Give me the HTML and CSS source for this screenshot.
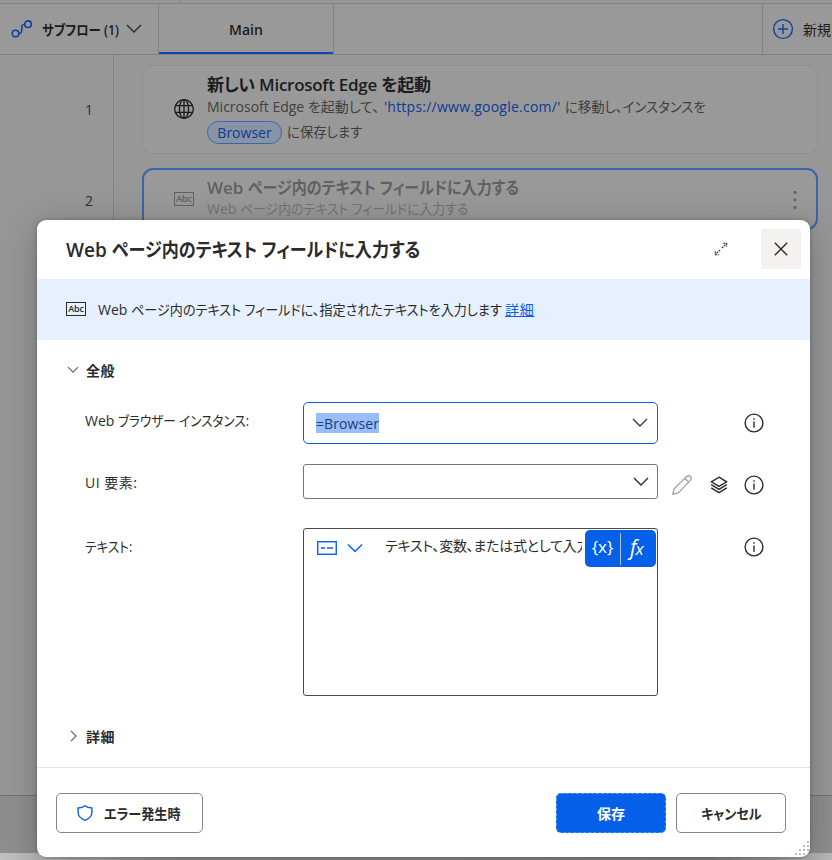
FILE: index.html
```html
<!DOCTYPE html>
<html lang="ja">
  <head>
    <meta charset="UTF-8" />
    <meta name="viewport" content="width=device-width, initial-scale=1" />
    <title>Web ページ内のテキスト フィールドに入力する</title>
    <link rel="stylesheet" href="styles.css" />
  </head>
  <body>
    <div class="app">
      <div class="toolbar"><span class="toolbar-split"></span></div>
      <nav class="tabs">
        <div class="subflows">
          <svg class="flow-icon" width="22" height="18" viewBox="0 0 22 18">
            <circle cx="4.5" cy="13.5" r="3.3" />
            <circle cx="17" cy="4.2" r="3.3" />
            <path d="M7.8 13.5c2.5 0 3-1.2 3-4.5s.3-4.8 2.9-4.8" />
          </svg>
          <span class="subflows-label"><span class="narrow n88">サブフロー (1)</span></span>
          <svg class="chevron" width="16" height="10" viewBox="0 0 16 10">
            <path d="M1 1l7 7 7-7" />
          </svg>
        </div>
        <div class="tab">Main</div>
        <div class="new-flow">
          <svg width="22" height="22" viewBox="0 0 22 22">
            <circle cx="11" cy="11" r="9.4" />
            <path d="M11 6v10M6 11h10" />
          </svg>
          <span>新規</span>
        </div>
      </nav>

      <main class="steps">
        <div class="gutter">
          <span>1</span>
          <span>2</span>
        </div>
        <div class="cards">
          <div class="card">
            <svg class="globe" width="22" height="22" viewBox="0 0 22 22">
              <circle cx="11" cy="11" r="9.3" />
              <ellipse cx="11" cy="11" rx="4.6" ry="9.3" />
              <path d="M11 1.7v18.6M2.5 7.7h17M2.500 14.300h17" />
            </svg>
            <div class="card-text">
              <h2 class="card-title title-edge">新しい Microsoft Edge を起動</h2>
              <p class="card-line"><span class="run-a">Microsoft Edge を起動して、</span><span class="url">'https://www.google.com/'</span><span class="run-b narrow n95">に移動し、インスタンスを</span></p>
              <p class="card-line second"><span class="pill">Browser</span><span class="run-c narrow n95">に保存します</span></p>
            </div>
          </div>
          <div class="card selected">
            <span class="abc">Abc</span>
            <div class="card-text">
              <h2 class="card-title">Web <span class="narrow n88">ページ内のテキスト フィールドに入力する</span></h2>
              <p class="card-line">Web <span class="narrow n92">ページ内のテキスト フィールドに入力する</span></p>
            </div>
            <svg class="more" width="4" height="20" viewBox="0 0 4 20">
              <circle cx="2" cy="2.500" r="1.400" />
              <circle cx="2" cy="10" r="1.400" />
              <circle cx="2" cy="17.500" r="1.400" />
            </svg>
          </div>
        </div>
      </main>
      <div class="statusbar"></div>
      <div class="desktop"></div>
    </div>

    <div class="dialog" role="dialog">
      <header class="dialog-header">
        <h1 class="dialog-title">Web <span class="narrow n90">ページ内のテキスト フィールドに入力する</span></h1>
        <svg class="expand" width="14" height="14" viewBox="0 0 14 14">
          <path class="line" d="M7.800 6.200L12.500 1.500M6.200 7.800L1.500 12.500" />
          <path class="line" d="M9.200 1.300h3.500v3.500M1.300 9.200v3.500h3.500" />
        </svg>
        <button class="close">
          <svg width="14" height="14" viewBox="0 0 14 14">
            <path d="M.8.8l12.400 12.400M13.200.8L.8 13.200" />
          </svg>
        </button>
      </header>

      <div class="info">
        <span class="abc">Abc</span>
        <span class="info-text">Web <span class="narrow n93">ページ内のテキスト フィールドに、指定されたテキストを入力します</span></span>
        <a class="more-link">詳細</a>
      </div>

      <section class="form">
        <div class="group">
          <svg width="12" height="8" viewBox="0 0 12 8"><path d="M1 1.200l5 5 5-5" /></svg>
          <span>全般</span>
        </div>

        <div class="row row-browser">
          <label>Web <span class="narrow n90">ブラウザー インスタンス:</span></label>
          <div class="combo focused">
            <span class="selection">=Browser</span>
            <svg class="chevron" width="16" height="10" viewBox="0 0 16 10"><path d="M1 1l7 7 7-7" /></svg>
          </div>
          <svg class="info-icon" width="20" height="20" viewBox="0 0 20 20">
            <circle cx="10" cy="10" r="8.900" />
            <path d="M10 8.500v6.300M10 5.200v1.600" />
          </svg>
        </div>

        <div class="row row-ui">
          <label class="lbl-ui">UI 要素:</label>
          <div class="combo">
            <svg class="chevron" width="16" height="10" viewBox="0 0 16 10"><path d="M1 1l7 7 7-7" /></svg>
          </div>
          <svg class="pencil" width="20" height="20" viewBox="0 0 20 20">
            <path d="M.8 19.200l1.300-5.400L14.600 1.600c2.700-2.200 6 .9 3.800 3.800L6.200 17.900zM12.900 3.300l3.800 3.800" />
          </svg>
          <svg class="layers" width="18" height="18" viewBox="0 0 18 18">
            <path d="M9 1.200l7.600 4.600L9 10.400 1.400 5.800zM1.200 8.700L9 13.400l7.800-4.700M1.200 11.800L9 16.600l7.800-4.800" />
          </svg>
          <svg class="info-icon" width="20" height="20" viewBox="0 0 20 20">
            <circle cx="10" cy="10" r="8.900" />
            <path d="M10 8.500v6.300M10 5.200v1.600" />
          </svg>
        </div>

        <div class="row row-text">
          <label><span class="narrow n90">テキスト:</span></label>
          <div class="textbox">
            <svg class="mode" width="20" height="14" viewBox="0 0 20 14">
              <rect x=".75" y=".75" width="18.500" height="12.500" />
              <path d="M4 7h4M10 7h6" />
            </svg>
            <svg class="chevron" width="16" height="10" viewBox="0 0 16 10"><path d="M1 1.500l7 7 7-7" /></svg>
            <span class="placeholder">テキスト、変数、または式として入力</span>
            <div class="expr">
              <span class="var">{x}</span>
              <span class="fx"><i class="f">f</i><i class="x">x</i></span>
            </div>
          </div>
          <svg class="info-icon" width="20" height="20" viewBox="0 0 20 20">
            <circle cx="10" cy="10" r="8.900" />
            <path d="M10 8.500v6.300M10 5.200v1.600" />
          </svg>
        </div>

        <div class="group group-detail">
          <svg width="12" height="12" viewBox="0 0 12 12"><path d="M4 1l5 5-5 5" /></svg>
          <span>詳細</span>
        </div>
      </section>

      <footer class="dialog-footer">
        <button class="btn btn-error">
          <svg width="16" height="16" viewBox="0 0 16 16">
            <path d="M8 .8c2 1.500 4.300 2.100 6.900 2.200v4.300c0 3.800-2.500 6.400-6.900 8-4.400-1.600-6.900-4.200-6.900-8V3C3.700 2.900 6 2.300 8 .8z" />
          </svg>
          <span class="narrow n93">エラー発生時</span>
        </button>
        <button class="btn btn-primary"><span>保存</span></button>
        <button class="btn btn-cancel"><span class="narrow mid n93">キャンセル</span></button>
      </footer>
      <svg class="grip" width="14" height="14" viewBox="0 0 14 14">
        <path d="M12 0h2v2h-2zM8 4h2v2H8zM12 4h2v2h-2zM4 8h2v2H4zM8 8h2v2H8zM12 8h2v2h-2zM0 12h2v2H0zM4 12h2v2H4zM8 12h2v2H8z" />
      </svg>
    </div>
  </body>
</html>
```
FILE: styles.css
```css
* {
  box-sizing: border-box;
}
body {
  margin: 0;
  width: 832px;
  height: 860px;
  position: relative;
  overflow: hidden;
  font-family: "Open Sans", "Noto Sans CJK JP", sans-serif;
  font-size: 14px;
  color: #2b2b2b;
  font-feature-settings: "palt";
  white-space: nowrap;
}
h1,
h2,
p {
  margin: 0;
}
svg {
  display: block;
  flex: none;
  fill: none;
  stroke: #2b2b2b;
  stroke-width: 1.4;
}
button {
  font: inherit;
  color: inherit;
  padding: 0;
  border: 0;
}

/* condensed kana, like the UI variant of the system font */
.narrow {
  display: inline-block;
  transform-origin: 0 50%;
}
.mid {
  transform-origin: 50% 50%;
}
.n88 {
  transform: scaleX(0.885);
}
.n90 {
  transform: scaleX(0.9);
}
.n92 {
  transform: scaleX(0.92);
}
.n93 {
  transform: scaleX(0.935);
}
.n95 {
  transform: scaleX(0.955);
}

/* dimmed designer window */
.app {
  display: flex;
  flex-direction: column;
  height: 860px;
  background: #979797;
}
.toolbar {
  height: 4px;
  flex: none;
  border-bottom: 1px solid #828282;
}
.toolbar-split {
  display: block;
  width: 181px;
  height: 3px;
  border-right: 1px solid #828282;
}
.tabs {
  display: flex;
  flex: none;
  height: 51px;
  border-bottom: 1px solid #828282;
  background: #999;
}
.subflows {
  display: flex;
  align-items: center;
  width: 159px;
  padding-left: 11px;
  border-right: 1px solid #828282;
  color: #1c1c1c;
  font-weight: 600;
}
.flow-icon {
  stroke: #0d42a0;
  stroke-width: 1.6;
}
.subflows-label {
  width: 76px;
  margin: 0 8px 0 9px;
}
.tab {
  width: 175px;
  line-height: 51px;
  text-align: center;
  font-weight: 600;
  color: #1c1c1c;
  border-right: 1px solid #828282;
  box-shadow: inset 0 -2px #0d47ad;
}
.new-flow {
  display: flex;
  align-items: center;
  gap: 9px;
  width: 70px;
  margin-left: auto;
  padding-left: 9px;
  border-left: 1px solid #828282;
  overflow: hidden;
  color: #1c1c1c;
}
.new-flow svg {
  stroke: #0d42a0;
}
.steps {
  display: flex;
  flex: 1;
}
.gutter {
  display: flex;
  flex-direction: column;
  width: 114px;
  padding: 39px 20px 0 0;
  border-right: 1px solid #828282;
  text-align: right;
  color: #303030;
}
.gutter span {
  height: 91px;
  line-height: 31px;
}
.cards {
  flex: 1;
  padding: 10px 14px 0 28px;
}
.card {
  display: flex;
  height: 89px;
  padding: 7px 20px 0 31px;
  border: 1px solid #8f8f8f;
  border-radius: 11px;
  background: #999;
}
.globe {
  margin: 25px 0 0 -1px;
  stroke: #1a1a1a;
  stroke-width: 1.3;
}
.card-text {
  flex: 1;
  padding-left: 12px;
}
.card-title {
  font-size: 17px;
  line-height: 24px;
  height: 23px;
  font-weight: 600;
  color: #1c1c1c;
}
.title-edge {
  letter-spacing: -0.27px;
}
.card-line {
  line-height: 21px;
  height: 21px;
  color: #3f3f3f;
}
.card-line.second {
  display: flex;
  align-items: center;
  height: 28px;
}
.url,
.pill {
  color: #0b3b91;
}
.run-a {
  display: inline-block;
  width: 177px;
}
.url {
  letter-spacing: 0.24px;
}
.run-b {
  margin-left: 5px;
}
.pill {
  width: 75px;
  height: 23px;
  line-height: 21px;
  margin: 2px 5px 0 0;
  border: 1px solid #3a66a9;
  border-radius: 12px;
  background: #8894a6;
  text-align: center;
}
.run-c {
  margin-top: 1px;
}
.selected {
  height: 62px;
  margin-top: 14px;
  padding: 6px 19px 0 30px;
  border: 2px solid #3a66a9;
}
.selected .card-title {
  color: #616161;
  height: 22px;
}
.selected .card-line {
  color: #737373;
}
.more {
  margin-top: 14px;
  fill: #606060;
  stroke: none;
}
.abc {
  flex: none;
  width: 20px;
  height: 14px;
  border: 1px solid #2b2b2b;
  font-size: 9px;
  line-height: 12px;
  letter-spacing: -0.2px;
  text-align: center;
  font-weight: 600;
}
.selected .abc {
  margin: 16px 1px 0 0;
  border-color: #606060;
  color: #606060;
}
.statusbar {
  height: 58px;
  border-top: 1px solid #747474;
  background: #8e8e8e;
}
.desktop {
  height: 7px;
  background: linear-gradient(90deg, #c0c0c0, #959595 20%, #888 85%, #b8b8b8);
}

/* dialog */
.dialog {
  position: absolute;
  left: 37px;
  top: 220px;
  width: 773px;
  height: 637px;
  border-radius: 9px;
  background: #fff;
  box-shadow: 0 6px 36px rgba(0, 0, 0, 0.24), 0 0 4px rgba(0, 0, 0, 0.25);
}
.dialog-header {
  display: flex;
  align-items: center;
  height: 59px;
  padding: 0 9px 2px 29px;
}
.dialog-title {
  flex: 1;
  font-size: 19px;
  font-weight: 600;
}
.expand {
  margin-right: 33px;
}
.expand .line {
  stroke-width: 1.1;
  stroke-dasharray: 2.2 0.8;
}
.close {
  display: flex;
  align-items: center;
  justify-content: center;
  width: 40px;
  height: 40px;
  background: #f3f2f1;
}
.info {
  display: flex;
  align-items: center;
  height: 61px;
  padding: 0 0 2px 29px;
  background: #e6f0ff;
}
.info-text {
  width: 402px;
  margin: 0 5px 0 12px;
}
.more-link {
  color: #0460e9;
  text-decoration: underline;
  letter-spacing: 0.7px;
}
.form {
  height: 427px;
  padding: 19px 0 0 30px;
}
.group {
  display: flex;
  align-items: center;
  gap: 7px;
  height: 22px;
  font-weight: 600;
  letter-spacing: 0.6px;
}
.group svg {
  stroke: #666;
  stroke-width: 1.2;
}
.row {
  display: flex;
  align-items: flex-start;
  padding-left: 18px;
}
.row label {
  width: 218px;
  padding-top: 9px;
  line-height: 20px;
}
.row .lbl-ui {
  letter-spacing: 0.5px;
}
.row-browser {
  margin-top: 21px;
  height: 62px;
}
.row-ui {
  height: 64px;
}
.row-text {
  height: 168px;
}
.combo {
  display: flex;
  align-items: center;
  justify-content: flex-end;
  width: 355px;
  height: 35px;
  padding: 0 8px 0 12px;
  border: 1px solid #767676;
  border-radius: 3px;
}
.focused {
  height: 42px;
  justify-content: space-between;
  padding-right: 9px;
  border-color: #0460e9;
  border-radius: 5px;
}
.selection {
  height: 20px;
  line-height: 21px;
  letter-spacing: 0.1px;
  background: #98bdf7;
  color: #173f7a;
}
.focused .chevron {
  stroke: #2d3b50;
}
.info-icon {
  margin: 11px 46px 0 auto;
}
.row-text .info-icon {
  margin-top: 9px;
}
.pencil {
  margin: 11px 0 0 14px;
  stroke: #a5a5a5;
}
.layers {
  margin: 12px 0 0 18px;
}
.textbox {
  display: flex;
  width: 355px;
  height: 168px;
  padding: 1px 1px 0 13px;
  border: 1px solid #4b4b4b;
  border-radius: 3px;
}
.mode {
  margin-top: 11px;
  stroke: #0460e9;
}
.textbox .chevron {
  margin: 13px 0 0 10px;
  stroke: #0460e9;
}
.placeholder {
  flex: 1;
  min-width: 0;
  height: 32px;
  margin: 0 3px 0 22px;
  line-height: 31px;
  letter-spacing: -0.25px;
  overflow: hidden;
}
.expr {
  display: flex;
  align-items: center;
  flex: none;
  width: 71px;
  height: 37px;
  border-radius: 5px;
  background: #0460e9;
  color: #fff;
}
.var {
  width: 36px;
  height: 32px;
  line-height: 28px;
  border-right: 1px solid #a6c8f8;
  font-size: 17px;
  font-weight: 500;
  text-align: center;
}
.fx {
  flex: 1;
  padding-left: 9px;
  line-height: 30px;
}
.f {
  font-size: 21px;
}
.x {
  font-size: 17px;
  margin-left: -1px;
}
.group-detail {
  margin-top: 29px;
}
.dialog-footer {
  display: flex;
  gap: 10px;
  height: 90px;
  padding: 25px 24px 0 19px;
  border-top: 1px solid #e5e5e5;
}
.btn {
  display: flex;
  align-items: center;
  justify-content: center;
  width: 110px;
  height: 40px;
  border: 1px solid #858585;
  border-radius: 5px;
  background: #fff;
  font-weight: 600;
}
.btn span {
  margin-top: -1px;
}
.btn-error {
  width: 147px;
  justify-content: flex-start;
  padding-left: 20px;
  gap: 11px;
  margin-right: auto;
}
.btn-error svg {
  stroke: #0460e9;
}
.btn-primary {
  border: 1px dashed #5b9aff;
  background: #0460e9;
  color: #fff;
}
.grip {
  position: absolute;
  right: 1px;
  bottom: 2px;
  fill: #aebdd6;
  stroke: none;
}
```
